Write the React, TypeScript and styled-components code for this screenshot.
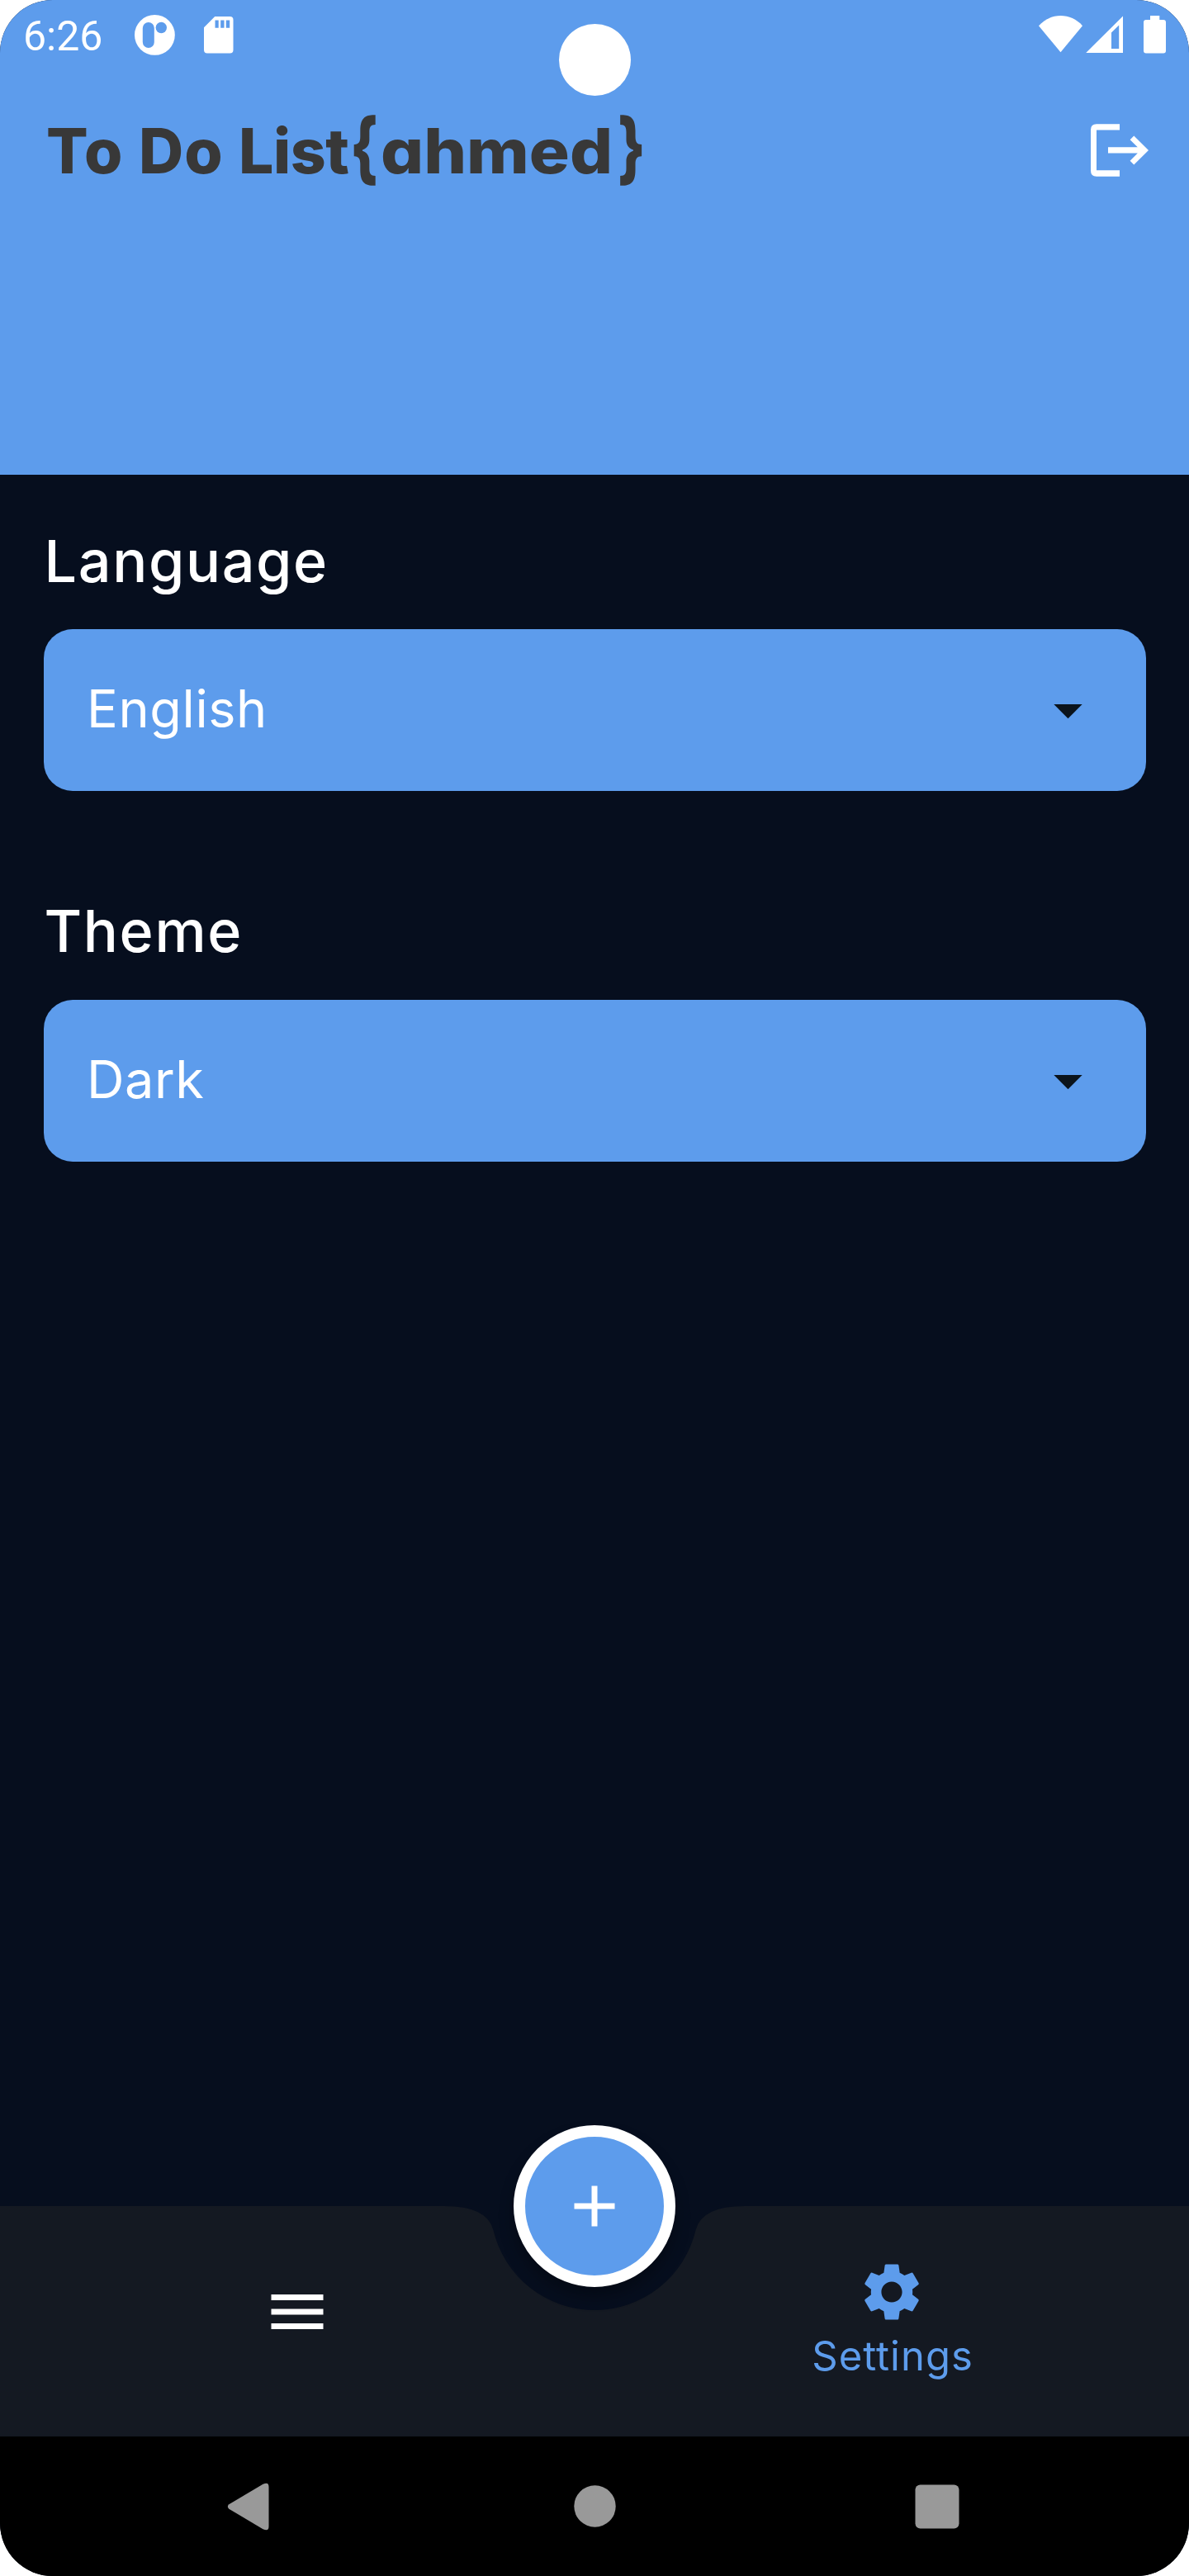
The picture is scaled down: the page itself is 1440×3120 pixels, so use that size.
import React from "react";
import styled, { createGlobalStyle } from "styled-components";
import { MdAdd, MdMenu, MdSettings } from "react-icons/md";

const blue = "#5d9cec";
const ink = "#060e1e";
const panel = "#141922";

const GlobalStyle = createGlobalStyle`
  *, *::before, *::after { box-sizing: border-box; }
  body { margin: 0; background: #ffffff; }
  svg { display: block; }
  button { appearance: none; border: 0; padding: 0; margin: 0; background: none; font: inherit; color: inherit; }
`;

const Screen = styled.div`
  position: relative;
  display: flex;
  flex-direction: column;
  width: 1440px;
  height: 3120px;
  overflow: hidden;
  border-radius: 64px;
  background: ${ink};
  color: #ffffff;
  font-family: Inter, "Liberation Sans", sans-serif;
`;

const Header = styled.header`
  height: 575px;
  flex: none;
  background: ${blue};
`;

const StatusBar = styled.div`
  display: flex;
  justify-content: space-between;
  height: 84px;
  padding: 0 28px;
`;

const StatusGroup = styled.div`
  display: flex;
  align-items: flex-start;
`;

const Clock = styled.span`
  width: 135px;
  margin-top: 15px;
  font-family: Roboto, "Liberation Sans", sans-serif;
  font-size: 50px;
  line-height: 59px;
  white-space: nowrap;
`;

const CameraCutout = styled.div`
  position: absolute;
  left: 677px;
  top: 29px;
  width: 87px;
  height: 87px;
  border-radius: 50%;
  background: #ffffff;
`;

const TitleBar = styled.div`
  display: flex;
  align-items: center;
  justify-content: space-between;
  height: 196px;
  padding: 0 45px 0 56px;
`;

const Title = styled.h1`
  display: flex;
  margin: 0;
  color: #383838;
  font-size: 75px;
  font-weight: 800;
  line-height: 91px;
  font-feature-settings: "cv11" 1;
  white-space: pre;
`;

const TitlePart = styled.span<{ $spacing: number; $width: number; $stretch?: number }>`
  width: ${(p) => p.$width}px;
  letter-spacing: ${(p) => p.$spacing}px;
  transform: scaleX(${(p) => p.$stretch ?? 1});
  transform-origin: left center;
`;

const Brace = styled.span`
  width: 34px;
  font-size: 94px;
  text-indent: -4px;
  transform: translateY(-4px) scaleX(0.74);
  transform-origin: left center;
`;

const Body = styled.main`
  display: flex;
  flex: 1;
  flex-direction: column;
  gap: 127px;
  padding: 62px 52.5px 0;
`;

const Field = styled.section`
  display: flex;
  flex-direction: column;
  gap: 40.4px;
`;

const FieldLabel = styled.label`
  height: 85px;
  padding-left: 1px;
  font-size: 70px;
  font-weight: 500;
  line-height: 85px;
  letter-spacing: 1.65px;
`;

const Select = styled.button`
  display: flex;
  align-items: center;
  justify-content: space-between;
  height: 196px;
  padding: 0 77px 0 52.5px;
  border-radius: 35px;
  background: ${blue};
`;

const SelectValue = styled.span`
  padding-bottom: 4px;
  font-size: 63px;
  line-height: 76px;
  letter-spacing: 0.6px;
`;

const BottomBar = styled.nav`
  position: relative;
  display: grid;
  grid-template-columns: 1fr 1fr;
  flex: none;
  height: 279px;
`;

const BarSurface = styled.div`
  position: absolute;
  inset: 0;
  background: ${panel};
  clip-path: path("M0 0H538Q590.5 0 597.4 29.07A126 126 0 0 0 842.6 29.07Q849.5 0 902 0H1440V279H0Z");
`;

const AddButton = styled.button`
  position: absolute;
  left: 622px;
  top: -98px;
  display: grid;
  place-items: center;
  width: 196px;
  height: 196px;
  border: 14px solid #ffffff;
  border-radius: 50%;
  background: ${blue};
  color: #ffffff;
  box-shadow: 0 12px 18px rgba(0, 0, 0, 0.3);
`;

const Tab = styled.button<{ $active?: boolean }>`
  position: relative;
  display: flex;
  flex-direction: column;
  align-items: center;
  padding-top: ${(p) => (p.$active ? 62 : 86)}px;
  color: ${(p) => (p.$active ? blue : "#ffffff")};
`;

const TabLabel = styled.span`
  margin-top: 6px;
  padding-left: 2px;
  font-size: 49px;
  line-height: 59px;
  letter-spacing: 1px;
`;

const SystemNav = styled.footer`
  display: flex;
  flex: none;
  align-items: center;
  gap: 362.5px;
  height: 169px;
  padding-left: 275px;
  background: #000000;
  color: #999999;
`;

function AppStatusIcon() {
  return (
    <svg width="49" height="84" viewBox="0 0 49 84" fill="none">
      <circle cx="24.4" cy="42.4" r="24.4" fill="#fff" />
      <rect x="9.8" y="27" width="14" height="31" rx="7" fill={blue} />
      <circle cx="32.3" cy="33.5" r="6.7" fill={blue} />
    </svg>
  );
}

const SdCard = styled.svg`
  margin-left: 34.5px;
`;

function SdCardIcon() {
  return (
    <SdCard width="36" height="84" viewBox="0 0 36 84">
      <path
        fill="#fff"
        fillRule="evenodd"
        d="M13.2 20H31.5Q35.5 20 35.5 24V60.5Q35.5 64.5 31.5 64.5H4Q0 64.5 0 60.5V33.2ZM13.5 24.5V33.7H17.7V24.5ZM20.2 24.5V33.7H24.5V24.5ZM26.8 24.5V33.7H31.2V24.5Z"
      />
    </SdCard>
  );
}

function SignalIcons() {
  return (
    <svg width="155" height="84" viewBox="1257 0 155 84" fill="#fff">
      <path d="M1258 31.3C1272 15 1297 15 1311 31.3L1284.5 63.3Z" />
      <path fillRule="evenodd" d="M1360 19.5V64H1315.2ZM1355.2 30.5L1346 39.5V59H1355.2Z" />
      <path d="M1393 19H1404.3V24H1409Q1412 24 1412 27V61.5Q1412 64.5 1409 64.5H1388Q1385 64.5 1385 61.5V27Q1385 24 1388 24H1393Z" />
    </svg>
  );
}

function LogoutIcon() {
  return (
    <svg width="74" height="66" viewBox="1321 149 74 66" fill="#fff">
      <path d="M1356 150.3V157.6H1328V206.2H1356V213.7H1328Q1321 213.7 1321 206.7V157.3Q1321 150.3 1328 150.3Z" />
      <path d="M1373.3 164.4L1391 182L1373.3 199.6L1368.6 194.7L1377.8 185.6H1342V178.2H1377.8L1368.6 169.2Z" />
    </svg>
  );
}

function Caret() {
  return (
    <svg width="35" height="22" viewBox="0 0 35 22">
      <path d="M0.3 4H34.7L17.5 21.2Z" fill="#0b141c" />
    </svg>
  );
}

function Dropdown({ label, value }: { label: string; value: string }) {
  return (
    <Field>
      <FieldLabel>{label}</FieldLabel>
      <Select type="button">
        <SelectValue>{value}</SelectValue>
        <Caret />
      </Select>
    </Field>
  );
}

export default function App() {
  return (
    <>
      <GlobalStyle />
      <Screen>
        <Header>
          <StatusBar>
            <StatusGroup>
              <Clock>6:26</Clock>
              <AppStatusIcon />
              <SdCardIcon />
            </StatusGroup>
            <StatusGroup>
              <SignalIcons />
            </StatusGroup>
          </StatusBar>
          <TitleBar>
            <Title>
              <TitlePart $width={112} $spacing={1}>To </TitlePart>
              <TitlePart $width={121} $spacing={1}>Do </TitlePart>
              <TitlePart $width={138} $spacing={-0.5}>List</TitlePart>
              <Brace>{"{"}</Brace>
              <TitlePart $width={290} $spacing={0} $stretch={1.09}>ahmed</TitlePart>
              <Brace>{"}"}</Brace>
            </Title>
            <LogoutIcon />
          </TitleBar>
        </Header>
        <CameraCutout />
        <Body>
          <Dropdown label="Language" value="English" />
          <Dropdown label="Theme" value="Dark" />
        </Body>
        <BottomBar>
          <BarSurface />
          <Tab type="button">
            <MdMenu size={84} />
          </Tab>
          <Tab type="button" $active>
            <MdSettings size={84} />
            <TabLabel>Settings</TabLabel>
          </Tab>
          <AddButton type="button">
            <MdAdd size={84} />
          </AddButton>
        </BottomBar>
        <SystemNav>
          <svg width="57" height="58" viewBox="275 3007 57 58" fill="#999">
            <path d="M277.3 3033.3L318.5 3008.8Q325.5 3005.5 325.5 3012V3060Q325.5 3066.5 318.5 3063.2L277.3 3038.7Q274.3 3036 277.3 3033.3Z" />
          </svg>
          <svg width="51" height="51" viewBox="0 0 51 51" fill="#999">
            <circle cx="25.5" cy="25.5" r="25.2" />
          </svg>
          <svg width="54" height="54" viewBox="0 0 54 54" fill="#999">
            <rect x="0.5" y="0.5" width="53" height="53" rx="6" />
          </svg>
        </SystemNav>
      </Screen>
    </>
  );
}
